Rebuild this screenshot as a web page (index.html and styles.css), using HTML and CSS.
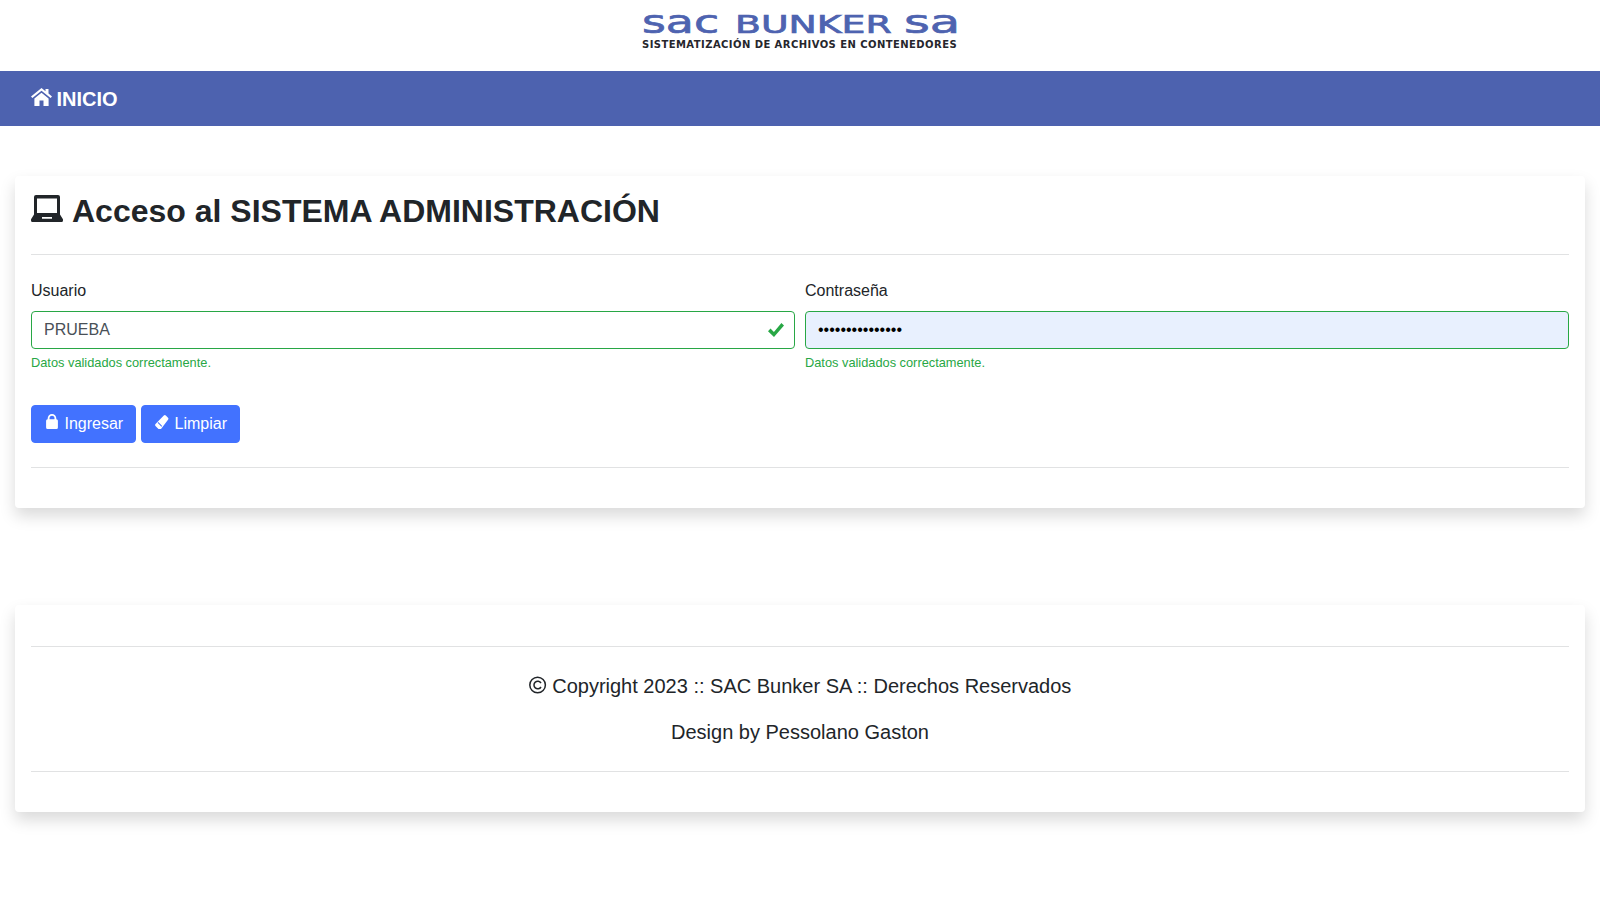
FILE: index.html
```html
<!DOCTYPE html>
<html lang="es">
<head>
<meta charset="utf-8">
<title>SAC Bunker SA</title>
<link rel="stylesheet" href="styles.css">
</head>
<body>
<header class="brand">
  <div class="logo">
    <div class="logo-name">
      <span class="word word-sac">sac</span>
      <span class="word word-bunker">BUNKER</span>
      <span class="word word-sa">sa</span>
    </div>
    <div class="logo-sub">SISTEMATIZACIÓN DE ARCHIVOS EN CONTENEDORES</div>
  </div>
</header>
<nav class="topbar">
  <a class="nav-link" href="#">
    <svg class="nav-icon" viewBox="0 0 21 18"><path fill="#fff" d="M10.500 0 0 8.400l1.400 1.700 9.100-7.400 9.100 7.400L21 8.400l-3.500-2.800V1h-3v2.200zM3.400 10.500V18h5.100V12.500h4V18h5.100v-7.500l-7.100-5.700z"/></svg>
    <span>INICIO</span>
  </a>
</nav>
<main class="page">
  <section class="card login">
    <h2 class="title">
      <svg class="title-icon" viewBox="0 0 32 27"><path fill="#212529" fill-rule="evenodd" d="M5 0h22a2 2 0 0 1 2 2v17.500l2.800 4.500a2 2 0 0 1 .2 1v.500a1.500 1.500 0 0 1-1.500 1.500H1.500A1.500 1.500 0 0 1 0 25.500V25a2 2 0 0 1 .2-1L3 19.500V2a2 2 0 0 1 2-2zm1 3.500V18h20V3.500zM11 22v1.700h10V22z"/></svg>
      <span>Acceso al SISTEMA ADMINISTRACIÓN</span>
    </h2>
    <hr class="rule">
    <form class="form">
      <div class="fields">
        <div class="field">
          <label class="label">Usuario</label>
          <div class="input valid">
            <span>PRUEBA</span>
            <svg class="check" viewBox="0 0 16 14"><path fill="#28a745" d="M13.400 0 16 2.500 6 14 0 8.200l2.500-2.600L5.900 8.900z"/></svg>
          </div>
          <div class="feedback">Datos validados correctamente.</div>
        </div>
        <div class="field">
          <label class="label">Contraseña</label>
          <div class="input filled"><span class="dots">•••••••••••••••</span></div>
          <div class="feedback">Datos validados correctamente.</div>
        </div>
      </div>
      <div class="actions">
        <button class="btn" type="button">
          <svg class="btn-icon" viewBox="0 0 16 16"><path fill="#fff" fill-rule="evenodd" d="M3.700 5.300V4.300a4.300 4.300 0 0 1 8.600 0v1h.1a1.500 1.500 0 0 1 1.500 1.500v6.700a1.500 1.500 0 0 1-1.500 1.500H3.600a1.500 1.500 0 0 1-1.500-1.500V6.800a1.500 1.500 0 0 1 1.500-1.500zM5.500 5.300h5V4.300a2.500 2.500 0 0 0-5 0z"/></svg>
          <span>Ingresar</span>
        </button>
        <button class="btn" type="button">
          <svg class="btn-icon" viewBox="0 0 16 16"><path fill="#fff" d="M9.800 1.500a1.400 1.400 0 0 1 2 0l2.200 2.200a1.400 1.400 0 0 1 0 2L7 15H4.500L1.500 12a1.400 1.400 0 0 1 0-2z"/><path fill="#4272ff" d="m4.300 8.100 3.900 3.900-.7.700-3.900-3.900z"/></svg>
          <span>Limpiar</span>
        </button>
      </div>
    </form>
    <hr class="rule rule-end">
  </section>
  <footer class="card legal">
    <hr class="rule">
    <p class="legal-line"><svg class="copy" viewBox="0 0 18 18"><circle cx="8.600" cy="9" r="7.800" fill="none" stroke="#212529" stroke-width="1.500"/><path fill="none" stroke="#212529" stroke-width="1.500" d="M12 11a3.800 3.800 0 1 1 0-4"/></svg> Copyright 2023 :: SAC Bunker SA :: Derechos Reservados</p>
    <p class="legal-line">Design by Pessolano Gaston</p>
    <hr class="rule">
  </footer>
</main>
</body>
</html>
```
FILE: styles.css
```css
* { box-sizing: border-box; }
html, body { margin: 0; padding: 0; background: #fff; }
body { font-family: "Liberation Sans", Arial, sans-serif; font-size: 16px; line-height: 1.5; color: #212529; }

.brand { height: 71px; display: flex; justify-content: center; padding-top: 15px; }
.logo { width: 316px; }
.logo-name { height: 18px; display: flex; align-items: baseline; margin-top: -2px; margin-bottom: 8px; color: #4e63b0; font-family: "DejaVu Sans", sans-serif; font-weight: 400; -webkit-text-stroke: .7px #4e63b0; }
.word { display: block; flex: none; white-space: nowrap; transform-origin: left center; line-height: 18px; }
.word-sac { width: 93px; font-size: 32px; transform: scaleX(1.43); }
.word-bunker { width: 169px; font-size: 24.700px; transform: scaleX(1.53); }
.word-sa { font-size: 32px; transform: scaleX(1.55); }
.logo-sub { font-family: "DejaVu Sans", sans-serif; font-weight: 700; font-size: 10px; line-height: 12px; letter-spacing: .44px; color: #26262c; white-space: nowrap; }

.topbar { height: 55px; background: #4d62af; display: flex; align-items: center; padding: 0 31px; }
.nav-link { display: flex; align-items: center; gap: 4.500px; color: #fff; font-weight: 700; font-size: 20px; text-decoration: none; }
.nav-icon { width: 21px; height: 18px; margin-top: -3px; }

.page { padding: 50px 15px 88px; display: flex; flex-direction: column; gap: 97px; }
.card { background: #fff; border-radius: 4px; padding: 0 16px; box-shadow: 0 8px 16px rgba(0,0,0,.15); }
.login { height: 332px; padding-top: 16px; }
.legal { height: 207px; padding-top: 41px; }

.title { margin: 0; display: flex; align-items: center; gap: 9px; font-size: 32px; font-weight: 700; line-height: 38px; }
.title-icon { width: 32px; height: 27px; margin-top: -6px; }
.rule { margin: 0; border: 0; border-top: 1px solid #e1e2e3; }
.title + .rule { margin-top: 24px; }

.form { padding-top: 24px; }
.fields { display: grid; grid-template-columns: 1fr 1fr; gap: 10px; }
.label { display: block; height: 24px; margin-bottom: 8px; }
.input { height: 38px; border: 1px solid #28a745; border-radius: 4px; padding: 0 12px; display: flex; align-items: center; justify-content: space-between; color: #495057; }
.input.filled { background: #e8f0fe; }
.dots { color: #000; }
.check { width: 16px; height: 14px; margin-right: -2px; }
.feedback { margin-top: 4px; font-size: 12.800px; line-height: 19px; color: #28a745; }

.actions { display: flex; gap: 5px; margin-top: 33px; }
.btn { height: 38px; border: 1px solid #4272ff; background: #4272ff; color: #fff; border-radius: 4px; padding: 0 12px; font: inherit; display: flex; align-items: center; gap: 4.450px; }
.btn-icon { width: 16px; height: 16px; margin-top: -4px; }

.rule-end { margin-top: 24px; }

.legal-line { margin: 0; text-align: center; font-size: 20px; line-height: 30px; }
.legal .rule + .legal-line { margin-top: 24px; }
.legal-line + .legal-line { margin-top: 16px; }
.legal-line + .rule { margin-top: 24px; }
.copy { width: 18px; height: 18px; vertical-align: -1px; }
```
